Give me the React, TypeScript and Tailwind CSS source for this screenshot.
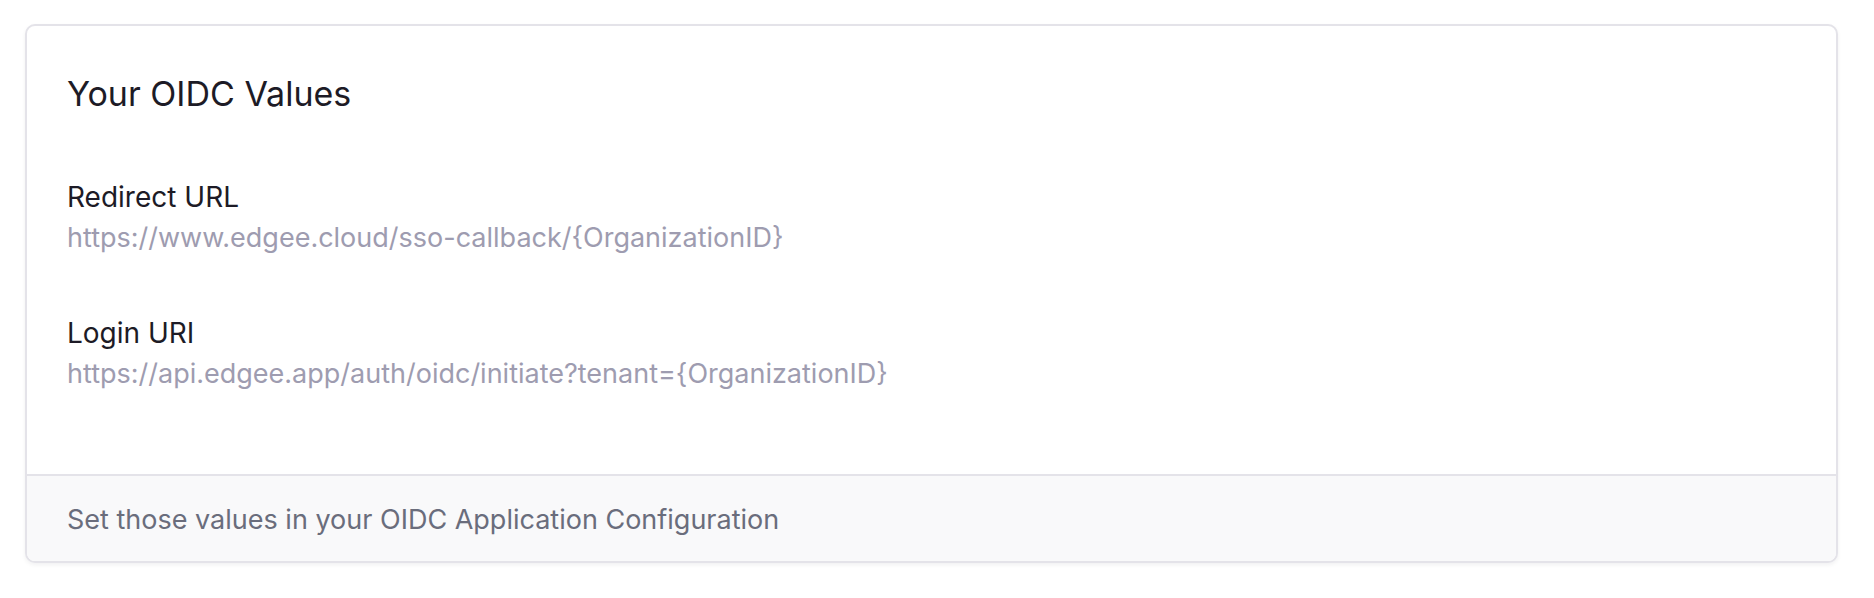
export default function App() {
  const fields = [
    { label: "Redirect URL", value: "https://www.edgee.cloud/sso-callback/{OrganizationID}" },
    { label: "Login URI", value: "https://api.edgee.app/auth/oidc/initiate?tenant={OrganizationID}" },
  ];

  return (
    <div className="min-h-[598px] bg-white pl-[25px] pr-[36px] pt-[24px] font-['Inter',sans-serif]">
      <div className="overflow-hidden rounded-[10px] border-2 border-[#e4e3e9] bg-white shadow-[0_2px_4px_rgba(20,20,40,0.06)]">
        {/* Body */}
        <div className="px-[40px] pt-[47px] pb-[82px]">
          <h2 className="text-[34px] leading-[42px] font-normal text-[#1d1b26]">Your OIDC Values</h2>
          <div className="mt-[64px] flex flex-col gap-[59px]">
            {fields.map((f) => (
              <div key={f.label} className="flex flex-col gap-[5px]">
                <div className="text-[28px] leading-[36px] text-[#1d1b26]">{f.label}</div>
                <div className="text-[27px] leading-[36px] text-[#9e9cb0]">{f.value}</div>
              </div>
            ))}
          </div>
        </div>

        {/* Footer */}
        <div className="border-t-2 border-[#e4e3e9] bg-[#f9f9fa] px-[40px] pt-[26px] pb-[23px]">
          <p className="text-[27px] leading-[36px] text-[#6a6d7c]">
            Set those values in your OIDC Application Configuration
          </p>
        </div>
      </div>
    </div>
  );
}
